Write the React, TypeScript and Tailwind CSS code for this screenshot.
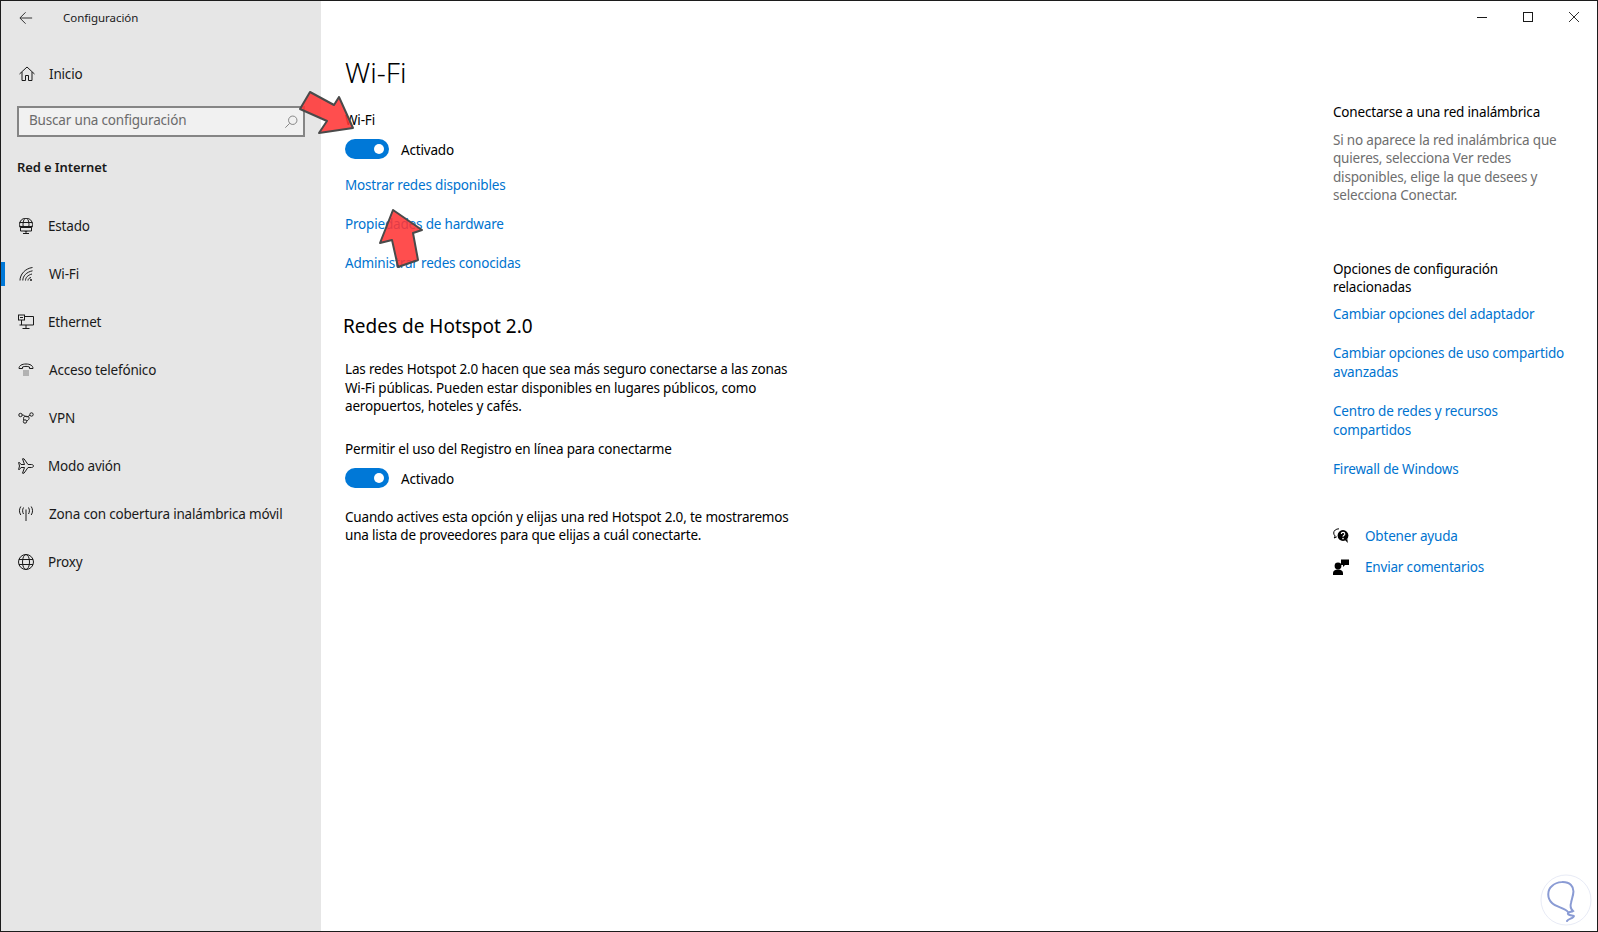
import React from 'react';

const font = '"Noto Sans", "Open Sans", sans-serif';

const Icon = ({ children, className = '' }: { children: React.ReactNode; className?: string }) => (
  <svg viewBox="0 0 16 16" fill="none" stroke="#1a1a1a" strokeWidth={1} className={`h-4 w-4 shrink-0 ${className}`}>
    {children}
  </svg>
);

const navItems: { label: string; icon: React.ReactNode; active?: boolean; labelClass: string }[] = [
  {
    label: 'Estado',
    labelClass: 'ml-[14px]',
    icon: (
      <>
        <circle cx="8" cy="6.500" r="6.500" />
        <ellipse cx="8" cy="6.500" rx="3" ry="6.500" />
        <path d="M1.500 4.500h13M1.500 8.500h13" />
        <path d="M2.500 9.500h11v3.500h-11zM8 13v2.500M5 15.500h6" fill="#e6e6e6" />
      </>
    ),
  },
  {
    label: 'Wi-Fi',
    active: true,
    labelClass: 'ml-[15px]',
    icon: (
      <>
        <path d="M2 14.500C2 8.500 7 2.500 14.500 1.500" />
        <path d="M4.800 14.500C4.800 10 8.500 6 14.500 4.800" />
        <path d="M7.500 14.500C7.500 11.500 10 9 14 8" />
        <path d="M10 14.500C10 13 11.200 12 13 11.500" />
        <circle cx="13" cy="14" r="1" fill="#1a1a1a" stroke="none" />
      </>
    ),
  },
  {
    label: 'Ethernet',
    labelClass: 'ml-[14px]',
    icon: (
      <>
        <path d="M4 2.500h11.500v8.500H1.500" />
        <path d="M8 11v3.500M4.500 14.500h7" />
        <rect x="0.500" y="1" width="6" height="5" fill="#e6e6e6" />
        <path d="M2 3.500h3M3.500 6v5" />
      </>
    ),
  },
  {
    label: 'Acceso telefónico',
    labelClass: 'ml-[15px]',
    icon: (
      <>
        <path d="M1 6.500C1 3.500 4 2 8 2s7 1.500 7 4.500h-3.500V5c-2-.8-5-.8-7 0v1.500z" />
        <path d="M5.500 9h1M7.500 9h1M9.500 9h1M5.500 11h1M7.500 11h1M9.500 11h1M5.500 13h1M7.500 13h1M9.500 13h1" />
      </>
    ),
  },
  {
    label: 'VPN',
    labelClass: 'ml-[15px]',
    icon: (
      <>
        <circle cx="2.500" cy="5" r="1.700" />
        <circle cx="13.500" cy="4.500" r="1.700" />
        <circle cx="7" cy="11.500" r="1.700" />
        <path d="M4.200 5c2 0 2 1 3.500 1.500s3 .5 4-1.500M8.500 11c3-1 3.500-4 1-4.500S5 6 5.700 10" />
      </>
    ),
  },
  {
    label: 'Modo avión',
    labelClass: 'ml-[14px]',
    icon: (
      <path d="M15.500 8c0-.8-1-1.500-2-1.500H10L6 .8H4.500L6.500 6.500H3L1.500 4.500H.6L1.500 8 .6 11.500h.9L3 9.500h3.500l-2 5.700H6l4-5.700h3.500c1 0 2-.7 2-1.500z" />
    ),
  },
  {
    label: 'Zona con cobertura inalámbrica móvil',
    labelClass: 'ml-[15px]',
    icon: (
      <>
        <path d="M8 3.500V15" />
        <path d="M5.500 1.500C4.300 3.500 4.300 6 5.500 8M10.500 1.500c1.200 2 1.200 4.500 0 6.500" />
        <path d="M2.800.5C1 3.200 1 6.300 2.800 9M13.200.5c1.800 2.700 1.800 5.800 0 8.500" />
      </>
    ),
  },
  {
    label: 'Proxy',
    labelClass: 'ml-[14px]',
    icon: (
      <>
        <circle cx="8" cy="8" r="7.500" />
        <ellipse cx="8" cy="8" rx="3.500" ry="7.500" />
        <path d="M1 5.500h14M1 10.500h14" />
      </>
    ),
  },
];

const Toggle = () => (
  <div className="flex items-center">
    <div className="flex h-5 w-11 items-center justify-end rounded-full bg-[#0078d7] pr-[5px]">
      <div className="h-2.5 w-2.5 rounded-full bg-white" />
    </div>
    <span className="ml-3 pt-[2px] text-[13.5px] leading-5 tracking-[-0.18px] text-black">Activado</span>
  </div>
);

const Sidebar = () => (
  <aside className="relative flex w-[320px] shrink-0 flex-col bg-[#e6e6e6]">
    <div className="flex h-[34px] items-center pl-[18px]">
      <svg viewBox="0 0 16 16" fill="none" stroke="#1a1a1a" strokeWidth={1} className="h-[14px] w-[14px]">
        <path d="M15 8H1.500M7.500 1.500 1 8l6.500 6.500" />
      </svg>
      <span className="ml-[30px] text-[11.5px] tracking-[-0.05px] text-[#1a1a1a]">Configuración</span>
    </div>
    <div className="mt-[19px] flex h-[40px] items-center pl-[18px]">
      <Icon>
        <path d="M.5 8 8 1l7.500 7M3 6v8.500h3.500v-5h3v5H13V6" />
      </Icon>
      <span className="ml-[14px] text-[13.5px] tracking-[-0.18px] text-[#1a1a1a]">Inicio</span>
    </div>
    <div className="mx-[16px] mt-[12px] flex h-[31px] w-[288px] items-center justify-between border-2 border-[#858585] bg-[#f1f1f1] pl-[10px] pr-[5px]">
      <span className="pb-[2px] text-[13.5px] tracking-[-0.18px] text-[#6b6b6b]">Buscar una configuración</span>
      <svg viewBox="0 0 16 16" fill="none" stroke="#777" strokeWidth={1} className="h-[14px] w-[14px]">
        <circle cx="10" cy="6" r="4.800" />
        <path d="M6.500 9.500 1.500 14.500" />
      </svg>
    </div>
    <div className="mt-[20px] pl-[16px] text-[13px] font-semibold leading-5 tracking-[-0.1px] text-[#1a1a1a]">Red e Internet</div>
    <nav className="mt-[25px] flex flex-col">
      {navItems.map((item) => (
        <div key={item.label} className="relative flex h-[48px] items-center pl-[17px]">
          {item.active && <div className="absolute left-0 top-[12px] h-[24px] w-1 bg-[#0078d7]" />}
          <Icon>{item.icon}</Icon>
          <span className={`whitespace-nowrap text-[13.5px] tracking-[-0.18px] text-[#1a1a1a] ${item.labelClass}`}>{item.label}</span>
        </div>
      ))}
    </nav>
  </aside>
);

const MainPanel = () => (
  <main className="w-[500px] pl-[24px] pt-[51px] text-[13.5px] tracking-[-0.18px]">
    <h1 className="text-[28px] font-light leading-[40px] tracking-normal text-black">Wi-Fi</h1>
    <div className="mt-[18px] leading-5 text-black">Wi-Fi</div>
    <div className="mt-[8px]">
      <Toggle />
    </div>
    <div className="mt-[15px] flex flex-col gap-[19px] leading-5 text-[#0073cf]">
      <a>Mostrar redes disponibles</a>
      <a>Propiedades de hardware</a>
      <a>Administrar redes conocidas</a>
    </div>
    <h2 className="-ml-[2px] mt-[39px] text-[19px] leading-7 tracking-normal text-black">Redes de Hotspot 2.0</h2>
    <p className="mt-[20px] whitespace-nowrap leading-[18.5px] text-black">
      Las redes Hotspot 2.0 hacen que sea más seguro conectarse a las zonas
      <br />
      Wi-Fi públicas. Pueden estar disponibles en lugares públicos, como
      <br />
      aeropuertos, hoteles y cafés.
    </p>
    <div className="mt-[23px] leading-5 text-black">Permitir el uso del Registro en línea para conectarme</div>
    <div className="mt-[8px]">
      <Toggle />
    </div>
    <p className="mt-[19px] whitespace-nowrap leading-[18.5px] text-black">
      Cuando actives esta opción y elijas una red Hotspot 2.0, te mostraremos
      <br />
      una lista de proveedores para que elijas a cuál conectarte.
    </p>
  </main>
);

const RightPanel = () => (
  <section className="ml-auto flex w-[264px] flex-col pt-[101px] text-[13.5px] tracking-[-0.18px]">
    <div className="leading-5 text-black">Conectarse a una red inalámbrica</div>
    <p className="mt-[9px] leading-[18.4px] text-[#6e6e6e]">
      Si no aparece la red inalámbrica que
      <br />
      quieres, selecciona Ver redes
      <br />
      disponibles, elige la que desees y
      <br />
      selecciona Conectar.
    </p>
    <p className="mt-[55px] leading-[18.5px] text-black">
      Opciones de configuración
      <br />
      relacionadas
    </p>
    <div className="mt-[8px] flex flex-col gap-[21px] leading-[18.5px] text-[#0073cf]">
      <a>Cambiar opciones del adaptador</a>
      <a>
        Cambiar opciones de uso compartido
        <br />
        avanzadas
      </a>
      <a>
        Centro de redes y recursos
        <br />
        compartidos
      </a>
      <a>Firewall de Windows</a>
    </div>
    <div className="mt-[47px] flex h-[20px] items-center text-[#0073cf]">
      <svg viewBox="0 0 16 16" className="h-4 w-4 shrink-0">
        <path d="M6 .8C3 .8.7 2.600.7 5c0 1.200.6 2.300 1.500 3L1.200 10l2.600-1.200" fill="none" stroke="#000" strokeWidth="1" />
        <circle cx="10" cy="7.500" r="5.400" fill="#000" />
        <path d="M12 12l2.800 3-.5-4z" fill="#000" />
        <path d="M8.300 6c0-2.200 3.500-2.200 3.500 0 0 1.300-1.800 1.300-1.800 2.800" fill="none" stroke="#fff" strokeWidth="1.100" />
        <circle cx="10" cy="10.600" r=".8" fill="#fff" />
      </svg>
      <a className="ml-[16px]">Obtener ayuda</a>
    </div>
    <div className="mt-[11px] flex h-[20px] items-center text-[#0073cf]">
      <svg viewBox="0 0 16 16" className="h-4 w-4 shrink-0" fill="#000">
        <circle cx="5" cy="7" r="3.400" />
        <path d="M0 16v-2c0-2 2-3.500 5-3.500s5 1.500 5 3.500v2z" />
        <path d="M8 .5h8v5.500h-4l-2 2v-2H8z" />
      </svg>
      <a className="ml-[16px]">Enviar comentarios</a>
    </div>
  </section>
);

export default function App() {
  return (
    <div
      className="relative flex h-[932px] w-[1598px] overflow-hidden border border-[#1c1c1c] bg-white"
      style={{ fontFamily: font }}
    >
      <Sidebar />
      <MainPanel />
      <RightPanel />

      {/* window buttons */}
      <div className="absolute right-0 top-0 flex h-[32px] items-center text-[#1a1a1a]">
        <div className="flex h-full w-[46px] items-center justify-center">
          <div className="h-px w-[10px] bg-[#1a1a1a]" />
        </div>
        <div className="flex h-full w-[46px] items-center justify-center">
          <div className="h-[10px] w-[10px] border border-[#1a1a1a]" />
        </div>
        <div className="flex h-full w-[46px] items-center justify-center">
          <svg viewBox="0 0 10 10" fill="none" stroke="#1a1a1a" strokeWidth={0.9} className="h-[10px] w-[10px]">
            <path d="M0 0l10 10M10 0 0 10" />
          </svg>
        </div>
      </div>

      {/* red annotation arrows */}
      <svg viewBox="0 0 1598 932" className="pointer-events-none absolute -left-px -top-px h-[932px] w-[1598px]">
        <path
          d="M353 128 339 97 334 105 310 92 300 109 327 121 319 133z"
          fill="#ff3535"
          fillOpacity={0.88}
          stroke="#4a4a4a"
          strokeWidth={2}
          strokeLinejoin="round"
        />
        <path
          d="M393 210 422 230 413 233 418 260 398 267 392 240 380 243z"
          fill="#ff3535"
          fillOpacity={0.88}
          stroke="#4a4a4a"
          strokeWidth={2}
          strokeLinejoin="round"
        />
        {/* watermark */}
        <circle cx="1566" cy="900" r="25" fill="#fff" stroke="#e8ebf6" strokeWidth={1} />
        <path
          d="M1568 912c-3-4-12-5-16-9-5-5-5-13 0-17 5-5 15-5 19-1 5 5 1 12 0 18-1 3 0 6 2 8-2 1-6 1-5 3 1 2 6 1 6 2 0 2-6 3-7 5"
          fill="none"
          stroke="#8a9bd4"
          strokeWidth={2}
          strokeLinecap="round"
        />
      </svg>
    </div>
  );
}
